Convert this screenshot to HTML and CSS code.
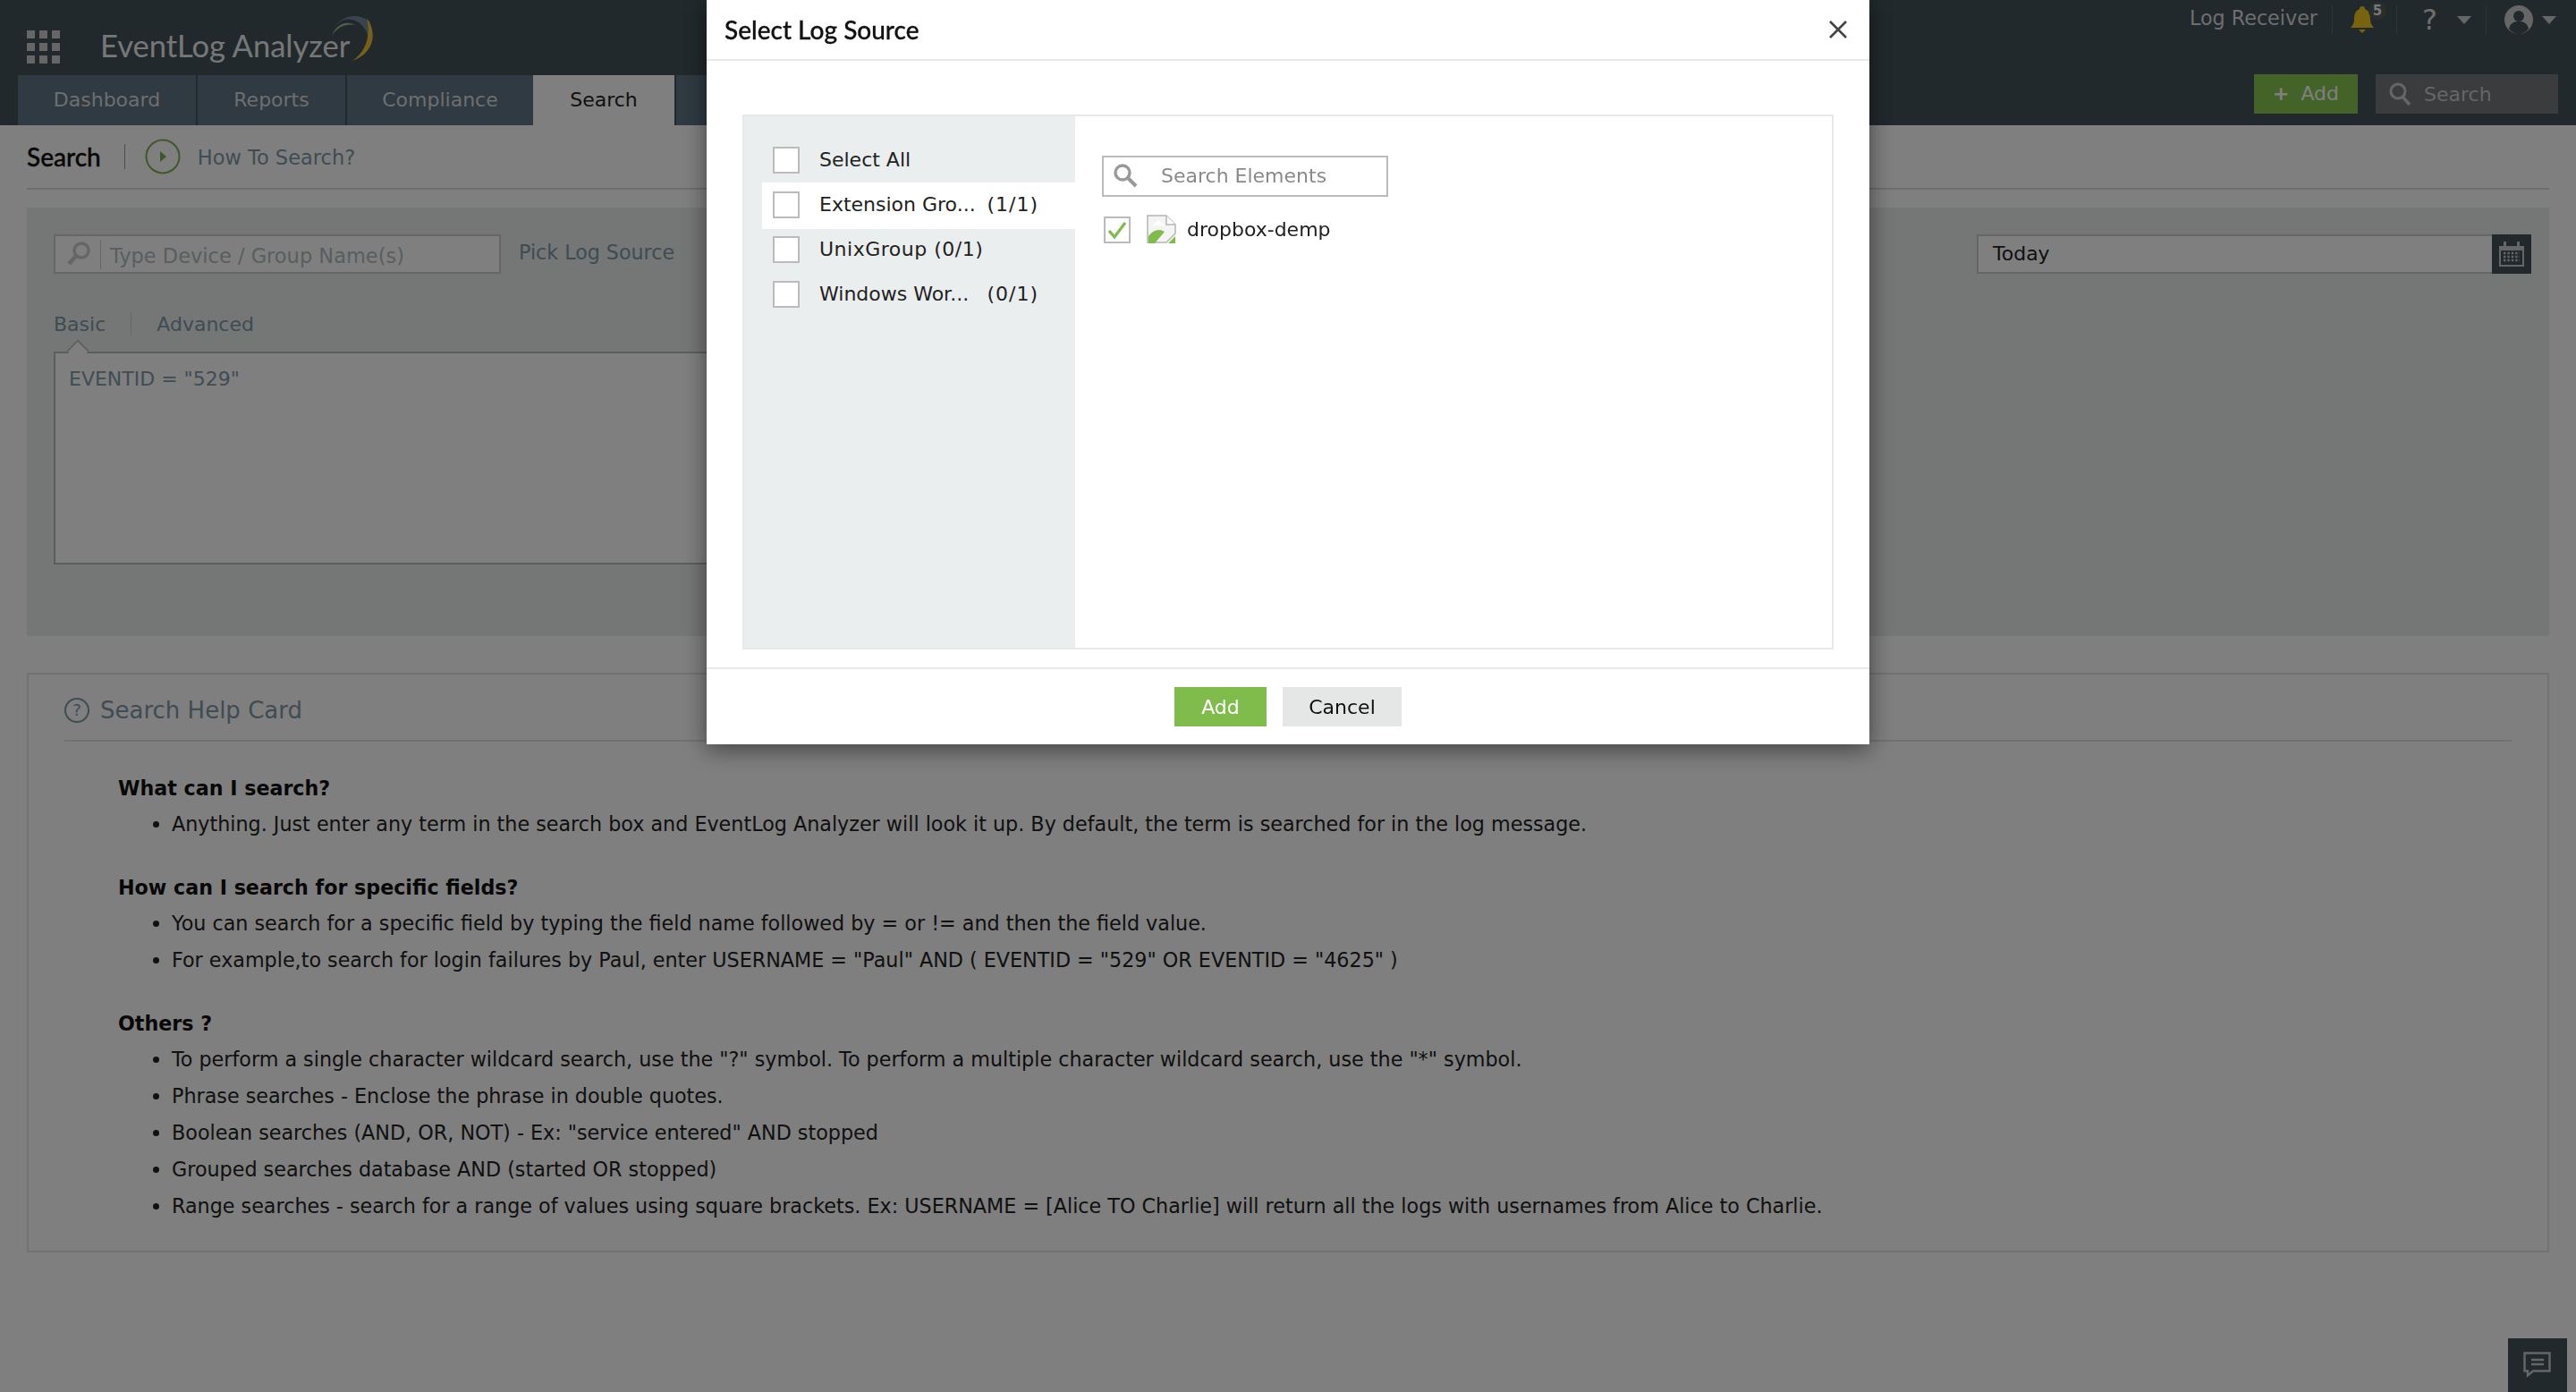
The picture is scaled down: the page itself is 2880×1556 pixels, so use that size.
FILE: index.html
```html
<!DOCTYPE html>
<html lang="en">
<head>
  <meta charset="UTF-8" />
  <title>EventLog Analyzer - Search</title>
  <link rel="stylesheet" href="styles.css">
</head>
<body>
  <header class="topbar">
    <div class="topbar-row">
      <div class="brand">
        <div class="apps">
          <i></i><i></i><i></i><i></i><i></i><i></i><i></i><i></i><i></i>
        </div>
        <span class="logo-text">EventLog Analyzer</span>
        <svg class="swoosh" width="60" height="56" viewBox="0 0 60 56">
          <path d="M10 26C14 14 26 8 36 14C26 12 16 16 10 26Z" fill="#9cc98a"/>
          <path d="M8 28C12 8 34-4 52 10C56 20 54 30 52 36C52 20 40 4 24 8C16 11 10 18 8 28Z" fill="#74889a"/>
          <path d="M49 6C62 24 56 46 33 54C48 44 54 26 49 6Z" fill="#f0c030"/>
        </svg>
      </div>
      <div class="util">
        <span class="util-link">Log Receiver</span>
        <span class="util-item bell">
          <svg width="28" height="32" viewBox="0 0 28 32"><path d="M14 1c2 0 3 1 3 3 5 2 6 7 6 12 0 4 2 7 4 9H1c2-2 4-5 4-9 0-5 1-10 6-12 0-2 1-3 3-3z M10 27h8l-4 4z" fill="#f0c81e"/></svg>
          <b class="badge">5</b>
        </span>
        <span class="util-item help">?<i class="caret"></i></span>
        <span class="util-item user">
          <svg width="32" height="32" viewBox="0 0 32 32"><circle cx="16" cy="16" r="16" fill="#ccc"/><circle cx="16" cy="12" r="6" fill="#42525a"/><path d="M5 26c2-7 6-8 11-8s9 1 11 8c-3 4-7 6-11 6s-8-2-11-6z" fill="#42525a"/></svg>
          <i class="caret"></i>
        </span>
      </div>
    </div>
    <div class="nav-row">
      <nav class="tabs">
        <a class="tab tab-dash">Dashboard</a>
        <a class="tab tab-rep">Reports</a>
        <a class="tab tab-comp">Compliance</a>
        <a class="tab tab-search active">Search</a>
        <a class="tab tab-more">Settings</a>
      </nav>
      <div class="nav-actions">
        <a class="btn-add"><span class="plus">+</span> Add</a>
        <div class="nav-search">
          <svg width="26" height="26" viewBox="0 0 26 26"><circle cx="11" cy="10" r="8" fill="none" stroke="#ccc" stroke-width="3"/><path d="M16 16l8 9" stroke="#ccc" stroke-width="3.5"/></svg>
          <span>Search</span>
        </div>
      </div>
    </div>
  </header>

  <main class="page">
    <div class="page-title">
      <h1>Search</h1>
      <span class="vline"></span>
      <svg class="play" width="40" height="40" viewBox="0 0 40 40"><circle cx="20" cy="20" r="18.5" fill="none" stroke="#7fb04f" stroke-width="2"/><path d="M17 14l7 6-7 6z" fill="#7fb04f"/></svg>
      <span class="how">How To Search?</span>
    </div>

    <section class="query-panel">
      <div class="query-top">
        <div class="source-input">
          <svg width="28" height="30" viewBox="0 0 28 30"><circle cx="17" cy="11" r="8" fill="none" stroke="#ccc" stroke-width="3.5"/><path d="M11 17l-8 9" stroke="#ccc" stroke-width="4.5"/></svg>
          <span class="source-ph">Type Device / Group Name(s)</span>
        </div>
        <a class="pick">Pick Log Source</a>
        <div class="date">
          <span class="date-val">Today</span>
          <span class="date-btn">
            <svg width="30" height="30" viewBox="0 0 30 30"><path d="M1 6h5V1h3v5h12V1h3v5h5v23H1z" fill="#ccc"/><rect x="3" y="11" width="24" height="16" fill="#42525a"/><path d="M6 14h18M6 18h18M6 22h18" stroke="#ccc" stroke-width="2.4" stroke-dasharray="2.4 2"/></svg>
          </span>
        </div>
      </div>
      <div class="mode-tabs">
        <span class="mode">Basic</span>
        <span class="mode-sep"></span>
        <span class="mode">Advanced</span>
      </div>
      <div class="query-box">EVENTID = "529"</div>
    </section>

    <section class="help-card">
      <div class="help-head">
        <svg width="28" height="28" viewBox="0 0 28 28"><circle cx="14" cy="14" r="13" fill="none" stroke="#7e98a8" stroke-width="2"/><text x="14" y="20" text-anchor="middle" class="help-q">?</text></svg>
        <span>Search Help Card</span>
      </div>
      <div class="help-body">
        <h4>What can I search?</h4>
        <ul>
          <li>Anything. Just enter any term in the search box and EventLog Analyzer will look it up. By default, the term is searched for in the log message.</li>
        </ul>
        <h4>How can I search for specific fields?</h4>
        <ul>
          <li>You can search for a specific field by typing the field name followed by = or != and then the field value.</li>
          <li>For example,to search for login failures by Paul, enter USERNAME = "Paul" AND ( EVENTID = "529" OR EVENTID = "4625" )</li>
        </ul>
        <h4>Others ?</h4>
        <ul>
          <li>To perform a single character wildcard search, use the "?" symbol. To perform a multiple character wildcard search, use the "*" symbol.</li>
          <li>Phrase searches - Enclose the phrase in double quotes.</li>
          <li>Boolean searches (AND, OR, NOT) - Ex: "service entered" AND stopped</li>
          <li>Grouped searches database AND (started OR stopped)</li>
          <li>Range searches - search for a range of values using square brackets. Ex: USERNAME = [Alice TO Charlie] will return all the logs with usernames from Alice to Charlie.</li>
        </ul>
      </div>
    </section>
  </main>

  <a class="chat">
    <svg width="32" height="30" viewBox="0 0 32 30"><path d="M1.5 1.5h28v20H11l-6 5v-5H1.5z" fill="none" stroke="#ccc" stroke-width="2.4"/><path d="M9 9h14M9 14h14" stroke="#ccc" stroke-width="2.4"/></svg>
  </a>

  <div class="backdrop"></div>

  <div class="modal">
    <div class="modal-head">
      <h2>Select Log Source</h2>
      <svg class="close" width="22" height="22" viewBox="0 0 22 22"><path d="M2 2l18 18M20 2L2 20" stroke="#444" stroke-width="2.6"/></svg>
    </div>
    <div class="modal-body">
      <div class="picker">
        <div class="groups">
          <div class="group"><span class="check"></span><span class="g-name">Select All</span></div>
          <div class="group current"><span class="check"></span><span class="g-name">Extension Gro...</span><span class="g-count">(1/1)</span></div>
          <div class="group"><span class="check"></span><span class="g-name g-wide">UnixGroup (0/1)</span></div>
          <div class="group"><span class="check"></span><span class="g-name">Windows Wor...</span><span class="g-count">(0/1)</span></div>
        </div>
        <div class="elements">
          <div class="el-search">
            <svg width="28" height="28" viewBox="0 0 28 28"><circle cx="11" cy="11" r="8" fill="none" stroke="#999" stroke-width="3.4"/><path d="M17 17l9 9" stroke="#999" stroke-width="4"/></svg>
            <span>Search Elements</span>
          </div>
          <div class="el-row">
            <span class="check">
              <svg width="24" height="22" viewBox="0 0 24 22"><path d="M3 12l6 7L21 3" fill="none" stroke="#7fbc4a" stroke-width="3.2"/></svg>
            </span>
            <svg class="broken" width="33" height="33" viewBox="0 0 33 33">
              <path d="M1 1h21l10 10v10l-10 10H1z" fill="#f4f4f4" stroke="#b5b5b5" stroke-width="1.5"/>
              <path d="M22 1v10h10" fill="#fff" stroke="#b5b5b5" stroke-width="1.5"/>
              <path d="M7 12l6-6 7 6z" fill="#fff"/>
              <path d="M2 32v-8c5-7 12-9 18-5L9 32z" fill="#7fbc4a"/>
              <path d="M24 32l8-8v8z" fill="#7fbc4a"/>
            </svg>
            <span class="el-name">dropbox-demp</span>
          </div>
        </div>
      </div>
    </div>
    <div class="modal-foot">
      <a class="m-btn m-add">Add</a>
      <a class="m-btn m-cancel">Cancel</a>
    </div>
  </div>
</body>
</html>
```

FILE: styles.css
```css
* { margin: 0; padding: 0; box-sizing: border-box; }
html, body { height: 100%; }
body {
  font-family: "DejaVu Sans", Verdana, sans-serif;
  font-size: 22.25px;
  color: #222;
  background: #fff;
  overflow: hidden;
  height: 1556px;
}

/* top header */
.topbar { background: #425259; height: 140px; display: flex; flex-direction: column; }
.topbar-row { height: 84px; display: flex; justify-content: space-between; padding: 0 30px; }
.brand { display: flex; align-items: flex-start; padding-top: 34px; }
.apps { display: grid; grid-template-columns: repeat(3, 9px); gap: 5px; width: 37px; height: 37px; }
.apps i { background: #ccc; height: 9px; }
.logo-text { font-family: Lato, sans-serif; font-size: 34.5px; color: #eee; margin-left: 45px; line-height: 34px; }
.swoosh { margin: -20px 0 0 -30px; }
.util { display: flex; align-items: flex-start; padding-top: 4px; color: #ddd; margin-right: -8px; }
.util-link { font-size: 22.25px; line-height: 32px; padding-right: 16px; }
.util-item { display: flex; align-items: center; height: 32px; border-left: 1px solid #5c6b72; margin-top: 2px; position: relative; }
.bell { width: 72px; padding-left: 19px; }
.badge {
  position: absolute; left: 40px; top: -4px;
  width: 20px; height: 20px; border-radius: 50%;
  background: #54585a; font-size: 15px; color: #eee; text-align: center; line-height: 20px;
}
.help { width: 100px; padding-left: 28px; font-size: 32px; }
.user { padding-left: 20px; }
.caret { display: inline-block; border: 8px solid transparent; border-top: 9px solid #ccc; border-bottom: 0; }
.help .caret { margin-left: 22px; }
.user .caret { margin-left: 10px; }

.nav-row { flex: 1; display: flex; justify-content: space-between; padding: 0 20px; }
.tabs { display: flex; gap: 2px; height: 56px; }
.tab { background: #5e7484; color: #ddd; font-size: 22px; line-height: 56px; text-align: center; }
.tab-dash { width: 199px; }
.tab-rep { width: 165px; }
.tab-comp { width: 208px; margin-right: -2px; }
.tab-search { width: 158px; }
.tab-more { width: 200px; }
.tab.active { background: #fff; color: #222; }
.nav-actions { display: flex; gap: 20px; height: 44px; margin-top: -1px; }
.btn-add { background: #88c652; color: #fff; width: 116px; font-size: 22px; line-height: 44px; text-align: center; }
.plus { font-weight: bold; margin-right: 6px; }
.nav-search { background: #74797c; width: 204px; display: flex; align-items: center; gap: 14px; padding-left: 14px; color: #ccc; font-size: 22px; }

/* page */
.page { padding: 0 30px; }
.page-title { height: 72px; display: flex; align-items: center; border-bottom: 2px solid #dcdcdc; }
.page-title h1 { font-family: Lato, sans-serif; font-size: 28px; font-weight: 500; color: #111; -webkit-text-stroke: .4px #111; }
.vline { width: 1px; height: 28px; background: #9a9a9a; margin: 0 22px 0 26px; }
.how { color: #7e98a8; font-size: 22.5px; margin-left: 19px; padding-top: 2px; }

.query-panel { background: #eaeeed; margin-top: 20px; height: 479px; padding: 30px 20px 30px 30px; }
.query-top { display: flex; align-items: flex-start; }
.source-input {
  width: 500px; height: 44px; border: 2px solid #ccc; background: #fff;
  display: flex; align-items: center; padding-left: 12px;
}
.source-ph { border-left: 1px solid #ccc; padding-left: 10px; margin-left: 10px; color: #b0bcc2; font-size: 22.5px; line-height: 30px; padding-top: 3px; }
.pick { margin-left: 20px; color: #7e98a8; font-size: 22.2px; line-height: 40px; }
.date { margin-left: auto; width: 620px; height: 44px; display: flex; background: #fff; border: 2px solid #ccc; border-right: 0; }
.date-val { flex: 1; padding-left: 16px; line-height: 40px; font-size: 22px; color: #222; }
.date-btn { width: 44px; height: 44px; margin-top: -2px; background: #42525a; display: flex; align-items: center; justify-content: center; }
.mode-tabs { display: flex; align-items: center; margin-top: 40px; height: 32px; color: #7e98a8; font-size: 22px; }
.mode-sep { width: 1px; height: 26px; background: #ccc; margin: 0 28px 0 28px; }
.query-box {
  margin-top: 15px; height: 238px; width: 1000px; padding: 16px 15px;
  background: #fff; border: 2px solid #bbb; color: #7e98a8; font-size: 22px; position: relative;
}
.query-box::before {
  content: ""; position: absolute; left: 14px; top: -14px;
  width: 20px; height: 20px; background: #fff;
  border-left: 2px solid #bbb; border-top: 2px solid #bbb;
  transform: rotate(45deg) scale(.8);
}

.help-card { margin-top: 41px; height: 648px; border: 2px solid #e2e2e2; padding: 0 40px; }
.help-head { height: 75px; display: flex; align-items: center; gap: 12px; padding-top: 7px; border-bottom: 2px solid #e2e2e2; color: #7e98a8; font-size: 26px; }
.help-q { font-family: "DejaVu Sans", sans-serif; font-size: 18px; fill: #7e98a8; }
.help-body { padding: 32px 0 0 60px; }
.help-body h4 { font-size: 22.2px; line-height: 40px; color: #111; font-weight: bold; }
.help-body ul { list-style: disc; padding-left: 60px; margin-bottom: 30px; }
.help-body li { line-height: 41px; }

.chat {
  position: fixed; right: 10px; bottom: 0;
  width: 66px; height: 60px; background: #42525a;
  display: flex; align-items: center; justify-content: center;
}

/* dialog */
.backdrop { position: fixed; inset: 0; background: rgba(0,0,0,.5); }
.modal {
  position: fixed; left: 790px; top: 0; width: 1300px; height: 832px;
  background: #fff; box-shadow: 0 5px 25px rgba(0,0,0,.5);
  display: flex; flex-direction: column;
}
.modal-head { height: 68px; display: flex; align-items: center; justify-content: space-between; padding: 0 24px 0 20px; border-bottom: 2px solid #e8e8e8; }
.modal-head h2 { font-family: Lato, sans-serif; font-size: 28px; font-weight: 500; color: #111; -webkit-text-stroke: .3px #111; }
.modal-body { flex: 1; padding: 60px 40px 20px; }
.picker { height: 598px; border: 2px solid #e8e8e8; display: flex; }
.groups { width: 370px; background: #ebeeef; padding: 24px 0 0 20px; }
.group { height: 50px; display: flex; align-items: center; padding-left: 12px; color: #222; font-size: 22px; }
.group.current { background: #fff; height: 52px; margin-bottom: -2px; padding-bottom: 3px; }
.g-name { margin: -1px 0 0 22px; }
.g-wide { letter-spacing: .5px; }
.g-count { margin: -1px 41px 0 auto; letter-spacing: 1px; }
.check { width: 30px; height: 30px; flex: none; background: #fff; border: 2px solid #bbb; display: inline-flex; align-items: center; justify-content: center; }
.elements { flex: 1; padding: 44px 30px; }
.el-search { width: 320px; height: 46px; border: 2px solid #bbb; display: flex; align-items: center; padding: 0 0 2px 10px; color: #8a8a8a; font-size: 22px; gap: 26px; }
.el-row { display: flex; align-items: center; margin: 20px 0 0 2px; font-size: 22px; }
.broken { margin-left: 18px; }
.el-name { margin-left: 12px; color: #222; }
.modal-foot { height: 86px; border-top: 2px solid #e8e8e8; display: flex; justify-content: center; align-items: flex-start; gap: 18px; padding-top: 20px; }
.m-btn { height: 44px; line-height: 46px; text-align: center; font-size: 22px; }
.m-add { width: 103px; background: #80bc4b; color: #fff; }
.m-cancel { width: 133px; background: #e5e6e6; color: #111; }
```
